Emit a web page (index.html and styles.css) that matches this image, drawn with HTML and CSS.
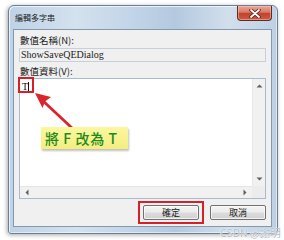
FILE: index.html
```html
<!DOCTYPE html>
<html lang="zh-Hant">
<head>
<meta charset="utf-8">
<link rel="stylesheet" href="styles.css">
</head>
<body>
<div class="window">
  <div class="titlebar">
    <span class="title">編輯多字串</span>
    <div class="close">
      <svg width="12" height="9" viewBox="0 0 12 9"><path d="M2 1 L10 8 M10 1 L2 8" stroke="#5a1a12" stroke-width="3.4" stroke-linecap="round"/><path d="M2 1 L10 8 M10 1 L2 8" stroke="#ffffff" stroke-width="1.8" stroke-linecap="round"/></svg>
    </div>
  </div>
  <div class="client">
    <div class="label">數值名稱(N):</div>
    <div class="textbox">ShowSaveQEDialog</div>
    <div class="label label2">數值資料(V):</div>
    <div class="textarea">
      <div class="ta-content"><span class="val">T</span><span class="caret"></span></div>
      <div class="vscroll">
        <svg width="7" height="4" viewBox="0 0 7 4"><path d="M0.5 3.5 L3.5 0.5 L6.5 3.5 Z" fill="#606060"/></svg>
        <svg width="7" height="4" viewBox="0 0 7 4"><path d="M0.5 0.5 L3.5 3.5 L6.5 0.5 Z" fill="#606060"/></svg>
      </div>
      <div class="hscroll">
        <svg width="4" height="7" viewBox="0 0 4 7"><path d="M3.5 0.5 L0.5 3.5 L3.5 6.5 Z" fill="#606060"/></svg>
        <svg width="4" height="7" viewBox="0 0 4 7"><path d="M0.5 0.5 L3.5 3.5 L0.5 6.5 Z" fill="#606060"/></svg>
      </div>
      <div class="corner"></div>
      <div class="mark"></div>
    </div>
    <div class="buttons">
      <div class="btn-wrap"><div class="btn">確定</div></div>
      <div class="btn">取消</div>
    </div>
  </div>
</div>
<svg class="arrow" width="284" height="240" viewBox="0 0 284 240">
  <line x1="72" y1="128" x2="42" y2="100" stroke="#d8262c" stroke-width="2.8"/>
  <path d="M35 93 L51 97 L45 101.5 L42.5 108 Z" fill="#d8262c"/>
</svg>
<div class="callout">將 F 改為 T</div>
<div class="watermark">CSDN @謝明</div>
</body>
</html>
```

FILE: styles.css
```css
html, body {
  margin: 0;
  padding: 0;
}
body {
  width: 284px;
  height: 240px;
  background: #ffffff;
  position: relative;
  overflow: hidden;
  font-family: "Noto Sans CJK TC", "Noto Sans", sans-serif;
}
.window {
  margin: 5px 0 0 8px;
  width: 270px;
  height: 229px;
  box-sizing: border-box;
  border: 1px solid #6a7e94;
  border-radius: 6px 6px 3px 3px;
  background: linear-gradient(to right, #bfd2e6 0%, #d4e1ee 25%, #c3d5e8 45%, #b4c9df 62%, #d2dfec 82%, #bcd0e5 100%);
  box-shadow: -1px 1px 4px rgba(0, 0, 0, 0.35), inset 1px 1px 0 rgba(255, 255, 255, 0.7), inset -1px -1px 0 rgba(255, 255, 255, 0.5);
  display: flex;
  flex-direction: column;
  padding: 0 5px 6px 4px;
}
.titlebar {
  height: 23px;
  display: flex;
  align-items: flex-start;
}
.title {
  margin: 7px 0 0 2px;
  font-size: 8px;
  line-height: 10px;
  color: #1a1a1a;
}
.close {
  margin-left: auto;
  width: 35px;
  height: 15px;
  box-sizing: border-box;
  border: 1px solid #5e2a22;
  border-top: none;
  border-radius: 0 0 4px 4px;
  background: linear-gradient(#e8a89a 0%, #d97966 45%, #c0432d 52%, #cc5a3e 100%);
  box-shadow: inset 0 0 0 1px rgba(255, 200, 190, 0.5);
  display: flex;
  align-items: center;
  justify-content: center;
}
.client {
  flex: 1;
  background: #f0f0f0;
  border: 1px solid #8599ae;
  padding: 4px 5px 0 5px;
  display: flex;
  flex-direction: column;
}
.label {
  font-size: 9.5px;
  line-height: 12px;
  color: #1c1c1c;
  padding-left: 1px;
}
.label2 {
  margin-top: 3px;
}
.textbox {
  margin-top: 2px;
  height: 14px;
  box-sizing: border-box;
  border: 1px solid #c6d0da;
  background: #f0f0f0;
  font-family: "Liberation Serif", serif;
  font-size: 10px;
  line-height: 12px;
  padding-left: 1px;
  color: #222;
}
.textarea {
  margin-top: 1px;
  height: 121px;
  box-sizing: border-box;
  border: 1px solid #a7bace;
  background: #ffffff;
  display: grid;
  grid-template-columns: 1fr 13px;
  grid-template-rows: 1fr 12px;
  position: relative;
}
.ta-content {
  padding: 2px 0 0 2px;
  font-family: "Liberation Serif", serif;
  font-size: 10px;
  line-height: 12px;
  color: #111;
  display: flex;
  align-items: flex-start;
}
.caret {
  width: 1px;
  height: 10px;
  margin-top: 1px;
  background: #111;
}
.vscroll {
  background: #f1f1f1;
  border-left: 1px solid #e6e6e6;
  display: flex;
  flex-direction: column;
  justify-content: space-between;
  align-items: center;
  padding: 5px 0 5px;
}
.hscroll {
  background: #f1f1f1;
  border-top: 1px solid #e6e6e6;
  display: flex;
  justify-content: space-between;
  align-items: center;
  padding: 0 5px;
}
.corner {
  background: #ececec;
}
.mark {
  position: absolute;
  left: -2px;
  top: -2px;
  width: 16px;
  height: 16px;
  box-sizing: border-box;
  border: 2.5px solid #d61f26;
}
.buttons {
  margin-top: 6px;
  display: flex;
  justify-content: flex-end;
  gap: 11px;
}
.btn-wrap {
  position: relative;
}
.btn-wrap::after {
  content: "";
  position: absolute;
  left: -5px;
  top: -4px;
  right: -5px;
  bottom: -4px;
  border: 2.5px solid #d61f26;
}
.btn {
  width: 56px;
  height: 15px;
  box-sizing: border-box;
  border: 1px solid #707070;
  border-radius: 2px;
  background: linear-gradient(#f3f3f3 0%, #ececec 48%, #dcdcdc 52%, #d0d0d0 100%);
  box-shadow: inset 0 0 0 1px rgba(255, 255, 255, 0.7);
  font-size: 9px;
  line-height: 13px;
  text-align: center;
  color: #1a1a1a;
}
.arrow {
  position: absolute;
  left: 0;
  top: 0;
}
.callout {
  position: absolute;
  left: 41px;
  top: 127px;
  width: 87px;
  height: 22px;
  box-sizing: border-box;
  background: linear-gradient(#fbf7a0, #f4ee7e);
  box-shadow: 1px 2px 2px rgba(0, 0, 0, 0.25);
  color: #1f8a22;
  font-size: 14px;
  letter-spacing: 0.6px;
  line-height: 22px;
  font-weight: 500;
  padding-left: 4px;
  white-space: pre;
}
.watermark {
  position: absolute;
  left: 220px;
  top: 227px;
  font-size: 10.5px;
  line-height: 12px;
  color: rgba(170, 182, 198, 0.95);
  text-shadow: 0 0 1px #fff, 0 0 1px #fff;
  white-space: nowrap;
}
```
